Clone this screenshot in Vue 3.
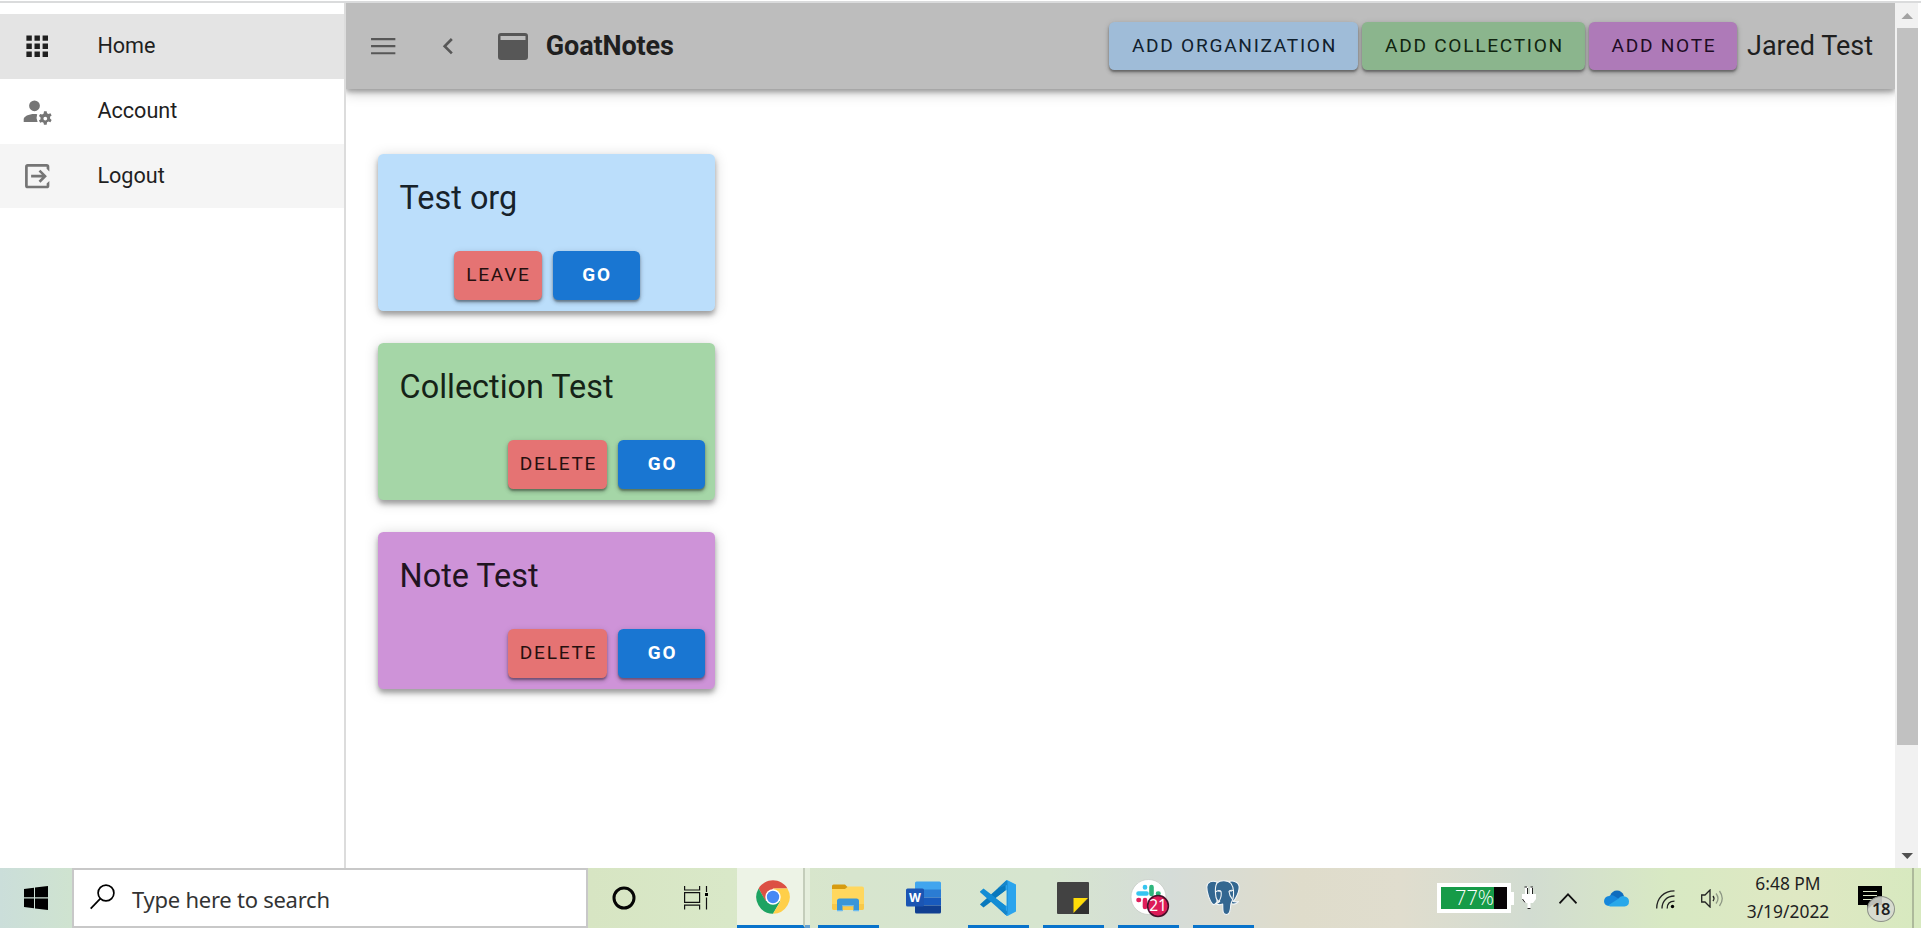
<script setup>
const cards = [
  { title: 'Test org', tone: 'blue', action: 'Leave' },
  { title: 'Collection Test', tone: 'green', action: 'Delete' },
  { title: 'Note Test', tone: 'purple', action: 'Delete' },
]
</script>

<template>
  <div class="screen">
    <div class="page">
      <nav class="drawer">
        <a class="item active">
          <svg class="nav-icon" viewBox="0 0 24 24"><path d="M16 20h4v-4h-4m0-2h4v-4h-4m-6-2h4V4h-4m6 4h4V4h-4m-6 10h4v-4h-4m-6 4h4v-4H4m0 10h4v-4H4m6 4h4v-4h-4M4 8h4V4H4v4Z" /></svg>
          <span>Home</span>
        </a>
        <a class="item">
          <svg class="nav-icon" viewBox="0 0 24 24"><path d="M10 4a4 4 0 0 1 4 4 4 4 0 0 1-4 4 4 4 0 0 1-4-4 4 4 0 0 1 4-4m7 8 .5 0h1.5l.3 1.5 1.1.6 1.4-.5.9 1.6-1.2 1c.1.5.1.8 0 1.3l1.2 1-.9 1.6-1.4-.5-1.1.6L19 22h-2l-.3-1.4-1.1-.6-1.4.5-.9-1.6 1.2-1a4 4 0 0 1 0-1.3l-1.2-1 .9-1.6 1.4.5 1.1-.6.3-1.5m1 3.7a1.4 1.4 0 0 0 0 2.8 1.4 1.4 0 0 0 0-2.8M10 14c.7 0 1.4.1 2 .2a7 7 0 0 0 .3 5.8H2v-2c0-2.200 3.600-4 8-4Z" /></svg>
          <span>Account</span>
        </a>
        <a class="item hover">
          <svg class="nav-icon" viewBox="0 0 24 24"><path d="M19 3H5a2 2 0 0 0-2 2v14a2 2 0 0 0 2 2h14a2 2 0 0 0 2-2v-3.500l-2 2V19H5V5h14v1.500l2 2V5a2 2 0 0 0-2-2m-4.600 4.200L13 8.600 15.500 11H7.500v2h8L13 15.400l1.400 1.400L19.200 12Z" /></svg>
          <span>Logout</span>
        </a>
      </nav>

      <div class="content">
        <header class="bar">
          <svg class="bar-icon menu" viewBox="0 0 24 24"><path d="M3 6h18v1.600H3zM3 11.200h18v1.600H3zM3 16.400h18V18H3z" /></svg>
          <svg class="bar-icon back" viewBox="0 0 24 24"><path d="M15.4 16.600 10.800 12l4.600-4.600L14 6l-6 6 6 6Z" /></svg>
          <svg class="app-icon" viewBox="0 0 30 27"><path fill-rule="evenodd" d="M3 0h24a3 3 0 0 1 3 3v21a3 3 0 0 1-3 3H3a3 3 0 0 1-3-3V3a3 3 0 0 1 3-3M2.500 3v4h25V3Z" /></svg>
          <h1>GoatNotes</h1>
          <div class="bar-actions">
            <button class="btn org">Add organization</button>
            <button class="btn col">Add collection</button>
            <button class="btn note">Add note</button>
          </div>
          <span class="user">Jared Test</span>
        </header>
        <main class="cards">
          <section v-for="c in cards" :key="c.title" class="card" :class="c.tone">
            <h2>{{ c.title }}</h2>
            <div class="card-actions">
              <button class="btn red" :class="c.action.toLowerCase()">{{ c.action }}</button>
              <button class="btn go">Go</button>
            </div>
          </section>
        </main>
      </div>

      <div class="scrollbar">
        <svg class="arrow" viewBox="0 0 24 25"><path fill="#a3a3a3" d="M6.500 16h11.500l-5.700-6z" /></svg>
        <div class="thumb"></div>
        <svg class="arrow" viewBox="0 0 24 25"><path fill="#505050" d="M6.500 10h11.500l-5.700 6z" /></svg>
      </div>
    </div>

    <footer class="taskbar">
      <div class="start">
        <svg width="24" height="24" viewBox="0 0 24 24"><path d="M0 3 10 1.700V11.300H0zM11 1.500 24 0v11.300H11zM0 12.400h10v9.800L0 21zM11 12.400h13V24l-13-1.600z" /></svg>
      </div>
      <div class="search">
        <svg width="25" height="26" viewBox="0 0 25 26" fill="none" stroke="#000" stroke-width="1.700"><circle cx="16" cy="9" r="7.900" /><path d="M10.300 14.700.7 24.700" /></svg>
        <span>Type here to search</span>
      </div>
      <div class="slot">
        <svg width="24" height="24" viewBox="0 0 24 24"><circle cx="12" cy="12" r="10" fill="none" stroke="#050505" stroke-width="3" /></svg>
      </div>
      <div class="slot view">
        <svg width="25" height="24" viewBox="0 0 25 24" fill="none" stroke="#111" stroke-width="1.200"><path d="M.6 0v4h15V0M.6 6.600h15v9.800H.6zM.6 23.500v-4.300h15v4.300M22.500 0v6M22.500 11.500v12" /><path d="M21 7h3v3h-3z" fill="#000" stroke="none" /></svg>
      </div>
      <div class="chrome">
        <svg width="34" height="34" viewBox="0 0 34 34">
          <path fill="#dc5044" d="M2.600 8.500A16.700 16.700 0 0 1 31.400 8.500H17L9.600 21.200z" />
          <path fill="#1da362" d="M2.600 8.500A16.700 16.700 0 0 0 17 33.700L24.300 21.300 9.800 21.100z" />
          <path fill="#ffcf49" d="M31.400 8.500A16.700 16.700 0 0 1 17 33.700L24.400 21.200 17 8.500z" />
          <circle cx="17" cy="17" r="7.700" fill="#fff" /><circle cx="17" cy="17" r="6.200" fill="#4688f4" />
        </svg>
      </div>
      <div class="chrome-stack"></div>
      <div class="apps">
        <div class="app open">
          <svg width="32" height="28" viewBox="0 0 32 28">
            <path fill="#ffd75e" d="M0 5h13l2.500-2.500H30q2 0 2 2V24q0 2-2 2H2q-2 0-2-2z" />
            <path fill="#d69b10" d="M0 2q0-1.500 1.500-1.500H13L15.500 3 13 5H0z" />
            <path fill="#f8c94a" d="M0 20h32v4q0 2-2 2H2q-2 0-2-2z" />
            <path fill="#3996d8" d="M5 27V17q0-2.500 2.500-2.500h17Q27 14.500 27 17v10h-5.500v-6H10.500v6z" />
            <path fill="#6bbcf1" d="M10.500 21h11v1.200h-11zM5 26h5.500v1.200H5zM21.500 26H27v1.200h-5.500z" />
          </svg>
        </div>
        <div class="app">
          <svg width="35" height="33" viewBox="0 0 35 33">
            <path fill="#41a5ee" d="M9 2q0-1.500 1.500-1.500h23Q35 .5 35 2v7H9z" /><path fill="#2b7cd3" d="M9 8.500h26v8H9z" /><path fill="#185abd" d="M9 16.500h26v8H9z" /><path fill="#103f91" d="M9 24.500h26V31q0 1.500-1.500 1.500h-23Q9 32.500 9 31z" />
            <rect y="7.500" width="18" height="18" rx="1.500" fill="#1b55b3" />
            <text x="9" y="21" text-anchor="middle" font-family="Inter, sans-serif" font-weight="700" font-size="12" fill="#fff">W</text>
          </svg>
        </div>
        <div class="app open">
          <svg class="code" width="36" height="36" viewBox="0 0 36 36">
            <path fill="#0879bd" d="m0 24.500 3.500 3L27 9.500V0L.4 24z" />
            <path fill="#138dd5" d="m0 11.500 3.500-3L27 26.500V36L.4 12.500Q-.3 12 0 11.500z" />
            <path fill="#2ba4ed" d="M27 0q-1 0-1.500 1l.500 34q.5 1 1.500 1L36 31.500v-27z" />
            <path fill="#1686cb" d="M25.500 1 18 8.200 27 5v26l-9-3.500 7.500 7.500 2-1V1z" />
            <path fill="#d5e7d0" d="M26.500 10v16L16 18z" />
          </svg>
        </div>
        <div class="app open">
          <svg width="32" height="32" viewBox="0 0 32 32"><rect width="32" height="32" rx="1" fill="#424242" /><path fill="#303030" d="M16 32 32 16v16z" /><path fill="#ffdc08" d="M16.500 16H31L16.500 31z" /></svg>
        </div>
        <div class="app open">
          <svg class="slack" width="40" height="40" viewBox="0 0 40 40">
            <circle cx="18.500" cy="18" r="17.500" fill="#fff" stroke="#c3c8c3" stroke-width=".7" />
            <g stroke-width="4.600" stroke-linecap="round">
              <path stroke="#36c5f0" d="M8.500 14.500h8M15 8v.5" /><path stroke="#2eb67d" d="M21.500 8v7M28 14.500h.5" /><path stroke="#e01e5a" d="M8.500 21h.5M15 21v7" /><path stroke="#ecb22e" d="M21.500 21h7" />
            </g>
            <circle cx="28" cy="27" r="10.400" fill="#dc1b57" stroke="#45102a" stroke-width="1.500" />
            <text x="28" y="32.300" text-anchor="middle" font-family="'Noto Sans', sans-serif" font-size="15.500" fill="#fff">21</text>
          </svg>
        </div>
        <div class="app open">
          <svg width="34" height="36" viewBox="0 0 34 36" fill="#336791" stroke="#f4f7f8" stroke-width="1.100" stroke-linejoin="round" stroke-linecap="round">
            <path d="M11 2C6 0 1 2 .8 7c0 6 3 14 5.700 17 1.500 1.500 3 0 4.500-1.800z" />
            <path d="M22 2c4-2 10-.8 11 4 .7 4-2 10-4.500 14l-1.500 1.500c2 .6 3.500.5 5.500 0-1.800 2.500-5 3-7.500 2z" />
            <path d="M11 3c3-3 11-3 14 .5 3 4 3 11 2 15-.5 3-2 3-2.300 7-.2 5-.7 9-4.200 9-4.500 0-3.500-5-3.800-10.500-2 .8-5 1-6.700-.5 2-.5 3-.8 3.700-2C9 20 10 16 9.500 13c-.3-4-.5-7 1.500-10z" />
            <path fill="none" d="M9.500 12q3-2.500 5.500-.5 1 4-1.500 9M27.500 10.500q-4-.8-4.500 1 .3 4 3.500 8" />
            <path d="M12.500 11h2M24 11h1.500" />
          </svg>
        </div>
      </div>

      <div class="tray">
        <div class="battery"><div class="level">77%</div></div>
        <i class="tip"></i>
        <svg class="plug" width="14" height="24" viewBox="0 0 14 24"><path fill="#fff" d="M3 1h3v7h2V1h3v7h3v5l-3 4H8.500v6h-3v-6H3l-3-4V8h3z" /><path fill="none" stroke="#222" d="M2.500 1H5M8.500 1H11M5.500 2v6M10.500 2v6M.5 13 3 16.500M5.500 22.500h3" /></svg>
        <svg class="up" width="18" height="11" viewBox="0 0 18 11" fill="none" stroke="#111" stroke-width="1.700"><path d="m.5 10.300 8.500-9 8.500 9" /></svg>
        <svg class="cloud" width="25" height="17" viewBox="0 0 25 17"><path fill="#0f6cbd" d="M6 6Q8 .5 13 .5q5 0 7 5.500l-4 5L6 8z" /><path fill="#1687db" d="M5 16Q0 15.500 0 11q.5-4.500 5-5 3-1.500 6 .5l8 5L8 16z" /><path fill="#28a8ea" d="M4 15.500 14 9q3-4 7-2.500 4 1 4 5 0 4.500-4.500 5H6z" /></svg>
        <svg class="wifi" width="19" height="19" viewBox="0 0 19 19" fill="none" stroke="#222" stroke-width="1.300"><path d="M.7 18.500C.7 8 8 .8 18.500.8M6 18.500C6 11 11 6 18.500 6M11.200 18.500q0-7.300 7.300-7.300" /><circle cx="16.500" cy="16.500" r="1.700" fill="#000" stroke="none" /></svg>
        <svg class="sound" width="23" height="19" viewBox="0 0 23 19" fill="none" stroke="#222" stroke-width="1.300"><path d="M.7 6H4L9 1v17l-5-5H.7z" /><path d="M12 7q2 2.500 0 5" /><path stroke="#8e9885" d="M15 4.500q4 5 0 10M18.500 2q5.500 7.500 0 15" /></svg>
        <div class="clock"><span>6:48 PM</span><span>3/19/2022</span></div>
        <div class="notice">
          <svg width="24" height="24" viewBox="0 0 24 24"><path d="M0 0h24v19H14l-5 5v-5H0z" /><path stroke="#dde6c6" stroke-width="1.200" d="M5 5.500h14M5 9.500h14M5 13.500h10" /></svg>
          <b>18</b>
        </div>
        <i class="peek"></i>
      </div>
    </footer>
  </div>
</template>

<style>
body { overflow: hidden; }
</style>

<style scoped>
* { box-sizing: border-box; }
.screen { width: 1921px; height: 928px; display: flex; flex-direction: column; background: #fff; font-family: Roboto, sans-serif; color: #1f1f1f; overflow: hidden; }
.page { height: 867px; flex: none; margin-top: 1px; border-top: 2px solid #dadbdc; display: flex; }
.drawer { width: 346px; border-right: 2px solid #dcdcdc; padding-top: 11px; }
.item { height: 64.800px; padding-left: 21px; display: flex; align-items: center; font-size: 21.600px; }
.item span { margin-left: 44px; margin-bottom: 1px; }
.active { background: #e4e4e4; }
.hover { background: #f5f5f5; }
.nav-icon { width: 32.400px; height: 32.400px; fill: #757575; }
.active .nav-icon { fill: #1f1f1f; }
.content { width: 1549px; overflow: hidden; }
.bar { height: 86px; background: #bdbdbd; display: flex; align-items: center; padding-left: 21px; box-shadow: 0 3px 5px rgba(0,0,0,.3), 0 5px 12px rgba(0,0,0,.17); }
.bar-icon { width: 32.400px; height: 32.400px; fill: #575757; }
.back { margin-left: 33px; }
.app-icon { width: 30px; height: 27px; margin-left: 33px; fill: #575757; }
h1 { margin: 0 0 0 18px; font-size: 27px; font-weight: 700; line-height: 40px; letter-spacing: -.12px; width: 160px; }
.bar-actions { display: flex; gap: 4px; margin-left: auto; }
.btn { font: 400 19.100px/48px Roboto, sans-serif; letter-spacing: 1.720px; text-transform: uppercase; white-space: nowrap; height: 48.600px; border: 0; border-radius: 5.400px; padding: 0 0 0 2px; color: #1f1f1f; text-align: center; box-shadow: 0 2px 2px rgba(0,0,0,.3), 0 3px 4px rgba(0,0,0,.16), 0 1px 6px rgba(0,0,0,.12); }
.org { width: 249px; background: #9fbcd8; color: #10202d; }
.col { width: 223px; background: #8bb58d; color: #10240f; }
.note { width: 148px; background: #ae7ab8; color: #200c24; }
.user { font-size: 27px; line-height: 40px; margin-left: 10px; width: 148px; white-space: nowrap; }
.cards { padding: 65px 0 0 32px; display: flex; flex-direction: column; gap: 32px; }
.card { width: 337px; height: 157px; border-radius: 5.400px; box-shadow: 0 4px 5px rgba(0,0,0,.3), 0 2px 14px rgba(0,0,0,.18); display: flex; flex-direction: column; }
.blue { background: #bbdefb; color: #17222a; }
.green { background: #a5d6a7; color: #152317; }
.purple { background: #ce93d8; color: #211422; }
h2 { margin: 23px 0 0 21.600px; font-size: 32.400px; line-height: 43px; font-weight: 400; }
.card-actions { display: flex; gap: 11px; justify-content: flex-end; padding-right: 10px; margin-top: 31px; }
.blue .card-actions { justify-content: center; padding-right: 0; }
.red { background: #e57373; color: #25100f; }
.leave { width: 88px; }
.delete { width: 99px; }
.go { width: 87px; background: #1976d2; color: #fff; font-weight: 700; font-size: 18.900px; }
.scrollbar { width: 23px; background: #f1f1f1; display: flex; flex-direction: column; }
.arrow { width: 24px; height: 25px; flex: none; }
.thumb { width: 21px; height: 717px; margin: 0 0 auto 2px; background: #c1c1c1; }

.taskbar { height: 60px; flex: none; display: flex; font-family: "Noto Sans", sans-serif; background: linear-gradient(90deg, #cbdeda 0, #cfe3d0 70px, #d7e5c3 590px, #d9e8c8 730px, #d7e5ce 850px, #d6e5cf 1050px, #d5dcd8 1170px, #dfdccb 1300px, #e0ddce 1400px, #d2dcd1 1530px, #d8e9c3 1670px, #dfe8c3 1800px, #d7e9bf 1921px); }
.start { width: 72px; display: flex; align-items: center; padding: 0 0 0 24px; }
.search { width: 516px; border: 2px solid #c8c8c8; background: #fff; display: flex; align-items: center; padding: 0 0 2px 16px; font-size: 22px; letter-spacing: -.25px; color: #333; }
.search span { margin: 3px 0 0 17px; }
.slot { width: 72px; display: flex; align-items: center; justify-content: center; }
.view { width: 77px; padding-right: 5px; }
.chrome { width: 68px; background: #edf3e6; border-right: 2px solid #c4cdbb; border-bottom: 3px solid #0873cb; display: flex; align-items: center; justify-content: center; padding-left: 5px; }
.chrome-stack { width: 5px; background: #e5eedd; border-bottom: 3px solid #639fd0; }
.apps { display: flex; gap: 14px; margin-left: 8px; }
.app { width: 61px; display: flex; align-items: center; justify-content: center; border-bottom: 3px solid transparent; padding: 2px 1px 0 0; }
.open { border-bottom-color: #0873cb; }
.slack { margin-left: 4px; margin-top: 3px; }
.tray { display: flex; align-items: center; margin-left: 183px; flex: none; }
.battery { width: 74px; height: 30px; border: 4px solid #fff; background: #080406; }
.level { width: 53px; height: 22px; background: #169b48; color: #fff; font: 300 20px/22px "Open Sans", sans-serif; text-align: right; }
.tip { width: 3px; height: 13px; background: #fff; }
.plug { margin-left: 8px; }
.up { margin-left: 23px; }
.cloud { margin-left: 27px; }
.wifi { margin-left: 27px; margin-top: 2px; }
.sound { margin-left: 26px; }
.clock { width: 90px; margin: 0 1px 2px 19px; display: flex; flex-direction: column; text-align: center; font-size: 17.400px; line-height: 28px; white-space: nowrap; }
.notice { position: relative; width: 24px; height: 24px; margin-left: 24px; }
.notice svg { display: block; }
.notice b { position: absolute; left: 9px; top: 10px; width: 28px; height: 26px; border: 1.500px solid #8c9089; border-radius: 50%; background: rgba(214,216,208,.88); font: 600 16.500px/23px "Noto Sans", sans-serif; letter-spacing: -.5px; text-align: center; }
.peek { width: 2px; height: 60px; margin-left: 30px; background: #adb99b; }
</style>
